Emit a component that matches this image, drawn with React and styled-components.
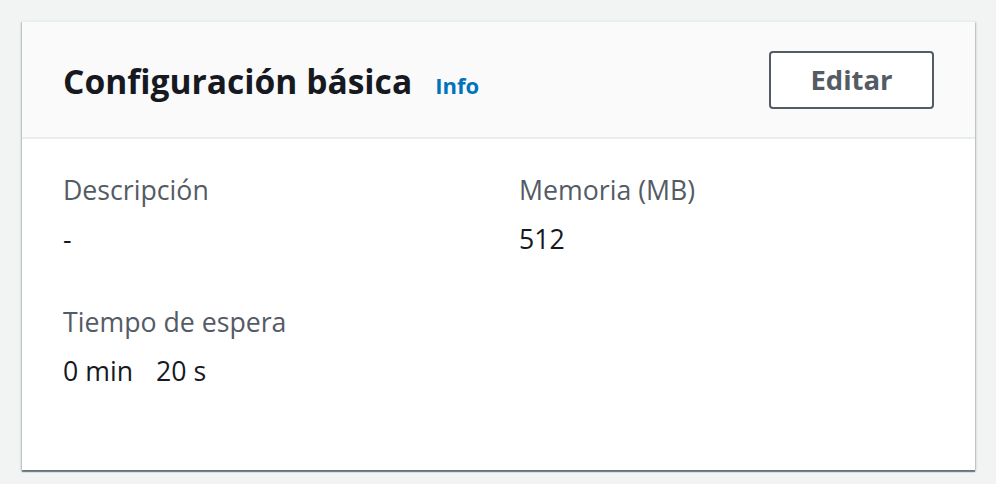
import React from "react";
import styled, { createGlobalStyle } from "styled-components";

const Global = createGlobalStyle`
  html, body { margin: 0; padding: 0; background: #f2f3f3; }
  body { font-family: "Open Sans", "Noto Sans", Arial, sans-serif; -webkit-font-smoothing: antialiased; }
`;

const Page = styled.div`
  padding: 21px 21px 14px 22px;
`;

const Card = styled.section`
  background: #ffffff;
  height: 449px;
  box-sizing: border-box;
  box-shadow: 0 2px 1px 0 rgba(0, 28, 36, 0.45), 1px 1px 2px 0 rgba(0, 28, 36, 0.2),
    -1px 1px 2px 0 rgba(0, 28, 36, 0.2);
  border-top: 1px solid #eaeded;
  display: flex;
  flex-direction: column;
`;

const Header = styled.header`
  background: #fafafa;
  height: 117px;
  box-sizing: border-box;
  border-bottom: 2px solid #eaeded;
  display: flex;
  align-items: center;
  justify-content: space-between;
  padding: 0 41px;
`;

const TitleRow = styled.div`
  display: flex;
  align-items: baseline;
  gap: 23px;
  margin-top: 2px;
`;

const Title = styled.h2`
  margin: 0;
  font-size: 33.6px;
  line-height: 46px;
  font-weight: 700;
  color: #16191f;
`;

const InfoLink = styled.a`
  font-size: 22px;
  font-weight: 700;
  color: #0073bb;
  text-decoration: none;
`;

const EditButton = styled.button`
  width: 165px;
  height: 58px;
  box-sizing: border-box;
  border: 2px solid #545b64;
  border-radius: 4px;
  background: #ffffff;
  color: #545b64;
  font-family: inherit;
  font-size: 27.5px;
  font-weight: 700;
  padding: 0;
  cursor: pointer;
`;

const Body = styled.div`
  padding: 31px 41px 0;
  display: grid;
  grid-template-columns: 1fr 1fr;
  column-gap: 41px;
  row-gap: 43px;
  align-content: start;
`;

const Field = styled.div`
  display: flex;
  flex-direction: column;
`;

const Label = styled.div`
  font-size: 26.7px;
  line-height: 40px;
  color: #545b64;
`;

const Value = styled.div`
  display: flex;
  gap: 23px;
  font-size: 26.7px;
  line-height: 40px;
  margin-top: 9px;
  color: #16191f;
`;

const fields = [
  { label: "Descripción", value: ["-"] },
  { label: "Memoria (MB)", value: ["512"] },
  { label: "Tiempo de espera", value: ["0 min", "20 s"] },
];

export default function App() {
  return (
    <>
      <Global />
      <Page>
        <Card>
          <Header>
            <TitleRow>
              <Title>Configuración básica</Title>
              <InfoLink href="#">Info</InfoLink>
            </TitleRow>
            <EditButton>Editar</EditButton>
          </Header>
          <Body>
            {fields.map((f) => (
              <Field key={f.label}>
                <Label>{f.label}</Label>
                <Value>
                  {f.value.map((part) => (
                    <span key={part}>{part}</span>
                  ))}
                </Value>
              </Field>
            ))}
          </Body>
        </Card>
      </Page>
    </>
  );
}
